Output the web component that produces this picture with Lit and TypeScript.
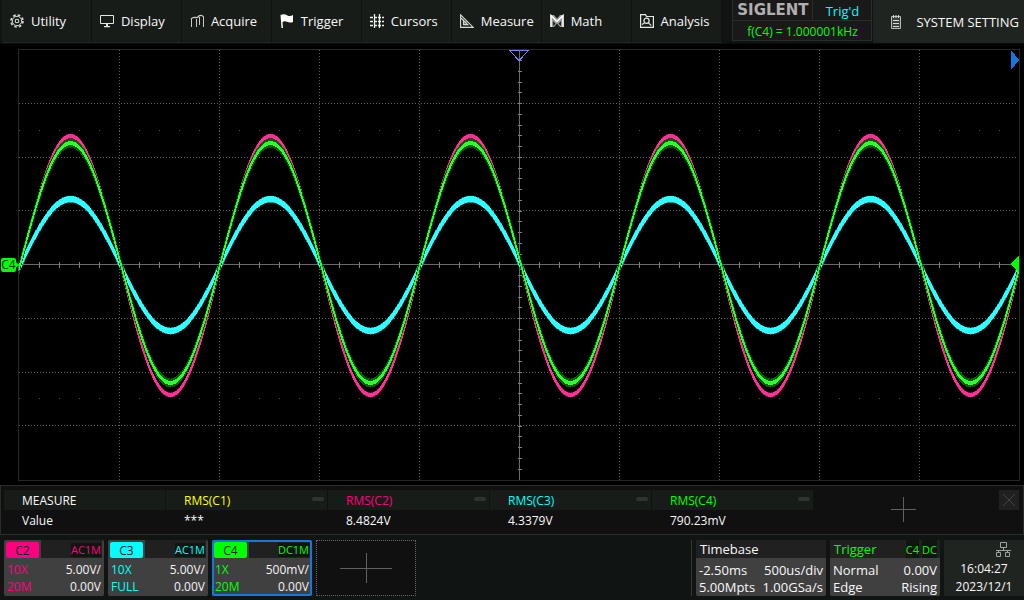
import { LitElement, html, svg, css } from "lit";
import { customElement, property } from "lit/decorators.js";
import { classMap } from "lit/directives/class-map.js";

const icons: Record<string, unknown> = {
  utility: svg`<g fill="none" stroke="#d8dad8">
    <circle cx="7" cy="7" r="6" stroke-width="1.600" stroke-dasharray="2.6 2.112"/>
    <circle cx="7" cy="7" r="4.700" stroke-width="1"/><circle cx="7" cy="7" r="1.8" stroke-width="1.100"/></g>`,
  display: svg`<path d="M.5 1.5h13v8H.5z" fill="none" stroke="#e6e8e6"/><path d="M6 10h2v2h2v1.200H4V12h2z" fill="#e6e8e6"/>`,
  acquire: svg`<g fill="none" stroke="#c8cac8"><path d="M1.500 13V5M6.500 13V5M9.500 11V3M13.500 13V3"/><path d="M1 5Q3 3 5.500 3.500T9 1.800Q12 .4 13.500 3" stroke-width="1.300"/></g>`,
  trigger: svg`<path d="M.5 1Q4 -.6 7 1.200T13 1V8Q10 9.200 7 7.800T2.500 8.200L3 14H1.500z" fill="#fff"/>`,
  cursors: svg`<g fill="none" stroke="#f0f2f0" stroke-width="1.300"><path d="M4.500 0v14M9.500 0v14" stroke-dasharray="3 1"/><path d="M0 3.500h14M0 7.500h14M0 11.500h14" stroke-dasharray="3 1"/></g>`,
  measure: svg`<g fill="none" stroke="#d8dad8" stroke-width="1.100"><path d="M.6.8V13.400H13.200z"/><path d="M3.500 6.500V10.600H7.800z"/><path d="M1 4l3 3M4.500 9.500l2-2"/></g>`,
  math: svg`<path d="M.5 1H4L7 4.500L10 1h3.500v12H10L7 9.500L4 13H.5z" fill="#9a9d9a"/><path d="M1 13V1.500L7 7.500L13 1.500V13" fill="none" stroke="#fff" stroke-width="1.500"/><path d="M3 12V7L5.500 9.800zM11 12V7L8.500 9.800z" fill="#222623"/>`,
  analysis: svg`<g fill="none" stroke="#e6e8e6" stroke-width="1.200"><path d="M.6.6H5.500L6.500 2.500H13.400V13.400H.6z"/><circle cx="6.500" cy="6.800" r="2.600"/><path d="M8.300 8.700l3 3M2 10.500l2.500-1.500"/></g>`,
};

const menu = ["Utility", "Display", "Acquire", "Trigger", "Cursors", "Measure", "Math", "Analysis"];

interface Channel {
  name: string; tone: string; coupling: string; probe: string; limit: string; scale: string; offset: string; active?: boolean;
}

const channels: Channel[] = [
  { name: "C2", tone: "pink", coupling: "AC1M", probe: "10X", limit: "20M", scale: "5.00V/", offset: "0.00V" },
  { name: "C3", tone: "cyan", coupling: "AC1M", probe: "10X", limit: "FULL", scale: "5.00V/", offset: "0.00V" },
  { name: "C4", tone: "green", coupling: "DC1M", probe: "1X", limit: "20M", scale: "500mV/", offset: "0.00V", active: true },
];

const measurements = [
  { label: "RMS(C1)", tone: "yellow", value: "***" },
  { label: "RMS(C2)", tone: "pink", value: "8.4824V" },
  { label: "RMS(C3)", tone: "cyan", value: "4.3379V" },
  { label: "RMS(C4)", tone: "green", value: "790.23mV" },
];

const tones = css`
  .pink { color: #ff0080; }
  .cyan { color: #00ffff; }
  .green { color: #00ff00; }
  .yellow { color: #ffff00; }
`;

/** Closed band that follows a sine trace, half px above and below it. */
function band(mid: number, amp: number, half: number): string {
  const top: string[] = [];
  const bottom: string[] = [];
  for (let x = 19; x <= 1018; x += 1) {
    const y = mid - amp * Math.sin(((x - 20.5) * Math.PI) / 100);
    top.push(`${x} ${(y - half).toFixed(1)}`);
    bottom.unshift(`${x} ${(y + half).toFixed(1)}`);
  }
  return `M${top.concat(bottom).join("L")}Z`;
}

const range = (n: number) => Array.from({ length: n }, (_, i) => i);

@customElement("scope-plot")
class ScopePlot extends LitElement {
  static styles = css`
    :host { display: block; position: relative; flex: 1; min-height: 240px; background: #000; }
    .plot { position: absolute; inset: 0; width: 100%; height: 100%; display: block; }
    .tag {
      position: absolute; left: 1px; top: 50%; margin-top: -7px;
      width: 15px; height: 14px; border-radius: 2px; background: #00ff00; color: #063c06;
      font: 12px/14px "Open Sans", sans-serif; text-align: center;
    }
    .tag::after { content: ""; position: absolute; left: 15px; top: 4px; border: solid transparent; border-width: 3px 0 3px 3px; border-left-color: #00ff00; }
    .frame { fill: none; stroke: #262826; }
    .dotted { fill: none; stroke: #626262; stroke-dasharray: 1 2; }
    .axis { fill: none; stroke: #6a6a6a; }
    .tick { fill: none; stroke: #808080; }
    .dot { fill: #505050; }
    .pink-haze { fill: #7a1040; stroke: #7a1040; stroke-width: 1; }
    .pink-trace { fill: #ff3096; stroke: #ff3096; stroke-width: 1; }
    .cyan-haze { fill: #0d8f92; stroke: #0d8f92; stroke-width: 2; }
    .cyan-trace { fill: #30ffff; stroke: #30ffff; stroke-width: 1; }
    .green-haze { fill: #075807; stroke: #075807; stroke-width: 1; }
    .green-trace { fill: #2cff2c; stroke: #2cff2c; stroke-width: 1; }
  `;

  render() {
    return html`
      <svg class="plot" viewBox="0 44 1024 441" preserveAspectRatio="none" shape-rendering="crispEdges" role="img" aria-label="Waveforms C2, C3 and C4">
        <rect class="frame" x="18.5" y="49.5" width="1001" height="431"/>
        ${range(9).filter((i) => i !== 4).map((i) => svg`<path class="dotted" d="M${119.5 + i * 100} 50V480"/>`)}
        ${[103, 157, 210, 318, 372, 425].map((y) => svg`<path class="dotted" d="M19 ${y + 0.5}H1018"/>`)}
        ${[130, 398].map((y) => range(50).map((i) => svg`<rect class="dot" x=${19 + i * 20} y=${y} width="1" height="1"/>`))}
        <path class="axis" d="M19 264.500H1019M519.500 50V480"/>
        ${range(49).map((i) => svg`<path class="tick" d="M${39.5 + i * 20} 262V268"/>`)}
        ${range(39).map((i) => svg`<path class="tick" d="M518 ${Math.round(60 + i * 10.75) + 0.5}H522"/>`)}
        <path class="pink-haze" d=${band(265.5, 129.5, 2)}/>
        <path class="pink-trace" d=${band(265.5, 129.5, 1.5)}/>
        <path class="cyan-haze" d=${band(265, 66, 2.5)}/>
        <path class="cyan-trace" d=${band(265, 66, 2.5)}/>
        <path class="green-haze" d=${band(263, 120, 4)}/>
        <path class="green-trace" d=${band(263, 120, 1.5)}/>
        <path d="M509.500 50.500H528.500L519 60.500z" fill="none" stroke="#8080ff"/>
        <path d="M1011 50L1019 60L1011 70z" fill="#1478dc"/>
        <path d="M1019 256V272L1010 264z" fill="#00ff00"/>
      </svg>
      <span class="tag">C4</span>
    `;
  }
}

@customElement("channel-card")
class ChannelCard extends LitElement {
  @property({ attribute: false }) channel!: Channel;

  static styles = [tones, css`
    :host { display: block; flex: 0 1 100px; }
    .card {
      display: flex; flex-direction: column; box-sizing: border-box; width: 100%; height: 56px; padding: 0 2px 2px;
      border: 0; border-radius: 2px; background: #404040; text-align: left;
      font: 12px/17px "Open Sans", sans-serif;
    }
    .active { box-shadow: inset 0 0 0 2px #1478dc; }
    .top { display: flex; align-items: stretch; gap: 2px; height: 18px; }
    .name { width: 33px; margin-top: 2px; border-radius: 2px; background: currentColor; text-align: center; line-height: 17px; }
    .name b { font-weight: 400; color: #102018; }
    .coupling { flex: 1; display: flex; justify-content: flex-end; align-items: center; padding: 2px 1px 0 0; background: #202020; font-size: 11px; }
    .active .coupling { margin-top: 2px; padding-top: 0; }
    .coupling span { background: #101510; line-height: 14px; }
    .row { display: flex; justify-content: space-between; padding: 0 1px; }
    .row:nth-child(2) { margin-top: 3px; }
    .value { color: #f4f4f4; }
  `];

  render() {
    const c = this.channel;
    return html`
      <button class=${classMap({ card: true, active: !!c.active })}>
        <span class="top"><span class="name ${c.tone}"><b>${c.name}</b></span><span class="coupling ${c.tone}"><span>${c.coupling}</span></span></span>
        <span class="row ${c.tone}">${c.probe}<span class="value">${c.scale}</span></span>
        <span class="row ${c.tone}">${c.limit}<span class="value">${c.offset}</span></span>
      </button>
    `;
  }
}

@customElement("app-root")
class AppRoot extends LitElement {
  static styles = [tones, css`
    :host { display: flex; flex-direction: column; min-height: 100vh; background: #000; color: #f8f8f8; font: 12px/20px "Open Sans", sans-serif; }
    button { border: 0; padding: 0; margin: 0; background: none; color: inherit; font: inherit; }
    svg { display: block; flex: none; }

    .header { display: flex; height: 44px; box-sizing: border-box; padding-left: 2px; background: #0f1311; border-bottom: 1px solid #090b0a; }
    .menu { display: flex; flex: 0 1 720px; }
    .item {
      flex: 1 1 0; display: flex; align-items: center; gap: 7px; padding-left: 8px; font-size: 13px; text-align: left;
      background: #181c19; border-right: 1px solid #0e110f; border-bottom: 1px solid #222623;
    }
    .status { flex: none; display: grid; grid-template-columns: 79px 58px; grid-template-rows: 20px 19px; gap: 1px; width: 140px; height: 41px; margin-left: 11px; padding: 0; border: solid #2a2c2a; border-width: 0 1px 1px; background: #2a2c2a; box-sizing: border-box; }
    .status > span { background: #191919; text-align: center; }
    .brand { color: #b0b0b0; font: bold 15px/20px "DejaVu Sans", sans-serif; }
    .trigd { font-size: 13px; line-height: 22px; }
    .freq { grid-column: span 2; font-size: 12px; line-height: 21px; }
    .system { flex: 1 0 150px; display: flex; align-items: center; gap: 14px; padding: 0 5px 0 17px; margin-left: 1px; background: #202421; font-size: 13px; white-space: nowrap; }

    .panel { display: flex; align-items: flex-start; height: 50px; box-sizing: border-box; padding: 4px 4px 3px 3px; border: 1px solid #2a2e2b; background: #101010; }
    .measure { flex: 0 1 810px; table-layout: fixed; border-collapse: separate; border-spacing: 0; }
    .measure th, .measure td { width: 162px; height: 20px; padding: 0 0 0 18px; box-sizing: border-box; font-weight: 400; text-align: left; line-height: 20px; }
    .measure th { background: #181c19; border-right: 1px solid #0e110f; }
    .measure th, .measure td { padding-top: 1px; line-height: 19px; }
    .head { display: flex; justify-content: space-between; padding-right: 3px; }
    .remove { width: 12px; height: 4px; margin-top: 6px; border-radius: 2px; background: #303431; }
    .add { display: flex; align-items: center; justify-content: center; flex: 1; height: 38px; padding-right: 6px; color: #606060; }
    .close { display: flex; align-items: center; justify-content: center; width: 20px; height: 20px; background: #202020; color: #444; }

    .footer { display: flex; gap: 4px; height: 65px; box-sizing: border-box; padding: 5px 0 4px 4px; background: #101412; }
    .new { flex: 0 1 100px; box-sizing: border-box; height: 56px; display: flex; align-items: center; justify-content: center; border: 1px dotted #686868; background: #101010; color: #606060; }
    .spacer { flex: 1; border-right: 1px solid #343834; }
    .box { height: 56px; background: #404040; border-radius: 2px; font-size: 13px; line-height: 17px; overflow: hidden; }
    .timebase { flex: 0 0 130px; }
    .trigger { flex: 0 0 110px; }
    .title { display: flex; justify-content: space-between; height: 18px; padding: 0 3px 0 4px; margin-bottom: 4px; background: #202020; line-height: 19px; }
    .badges { display: flex; gap: 3px; font-size: 11px; }
    .badges span { background: #101510; }
    .pair { display: flex; justify-content: space-between; padding: 0 3px; }
    .clock { flex: 0 0 80px; height: 56px; background: #202421; text-align: center; line-height: 18px; }
    .clock svg { margin: 2px 12px 2px auto; }
  `];

  plus(w: number, h: number) {
    return html`<svg width=${w} height=${h} viewBox="0 0 ${w} ${h}" shape-rendering="crispEdges"><path d="M0 ${Math.floor(h / 2) + 0.5}H${w}M${Math.floor(w / 2) + 0.5} 0V${h}" stroke="currentColor"/></svg>`;
  }

  render() {
    return html`
      <header class="header">
        <nav class="menu">
          ${menu.map((m) => html`<button class="item"><svg width="14" height="14" viewBox="0 0 14 14">${icons[m.toLowerCase()]}</svg>${m}</button>`)}
        </nav>
        <div class="status">
          <span class="brand">SIGLENT</span><span class="trigd cyan">Trig'd</span><span class="freq green">f(C4) = 1.000001kHz</span>
        </div>
        <button class="system">
          <svg width="12" height="14" viewBox="0 0 12 14"><path d="M1.500 1.500H10.500V13.500H1.500z" fill="#3b3f3c" stroke="#b8bab8"/><path d="M3.500 0V3M6 0V3M8.500 0V3M3 5.500H9M3 8.500H9M3 11.500H9" stroke="#d8dad8"/></svg>
          SYSTEM SETTING
        </button>
      </header>
      <scope-plot></scope-plot>
      <section class="panel">
        <table class="measure">
          <tr><th>MEASURE</th>${measurements.map((m) => html`<th class=${m.tone}><span class="head">${m.label}<button class="remove" aria-label="Remove ${m.label}"></button></span></th>`)}</tr>
          <tr><td>Value</td>${measurements.map((m) => html`<td>${m.value}</td>`)}</tr>
        </table>
        <button class="add" aria-label="Add measurement">${this.plus(25, 25)}</button>
        <button class="close" aria-label="Close"><svg width="12" height="12" viewBox="0 0 12 12"><path d="M0 0L12 12M12 0L0 12" stroke="currentColor"/></svg></button>
      </section>
      <footer class="footer">
        ${channels.map((c) => html`<channel-card .channel=${c}></channel-card>`)}
        <button class="new" aria-label="Add channel">${this.plus(52, 30)}</button>
        <div class="spacer"></div>
        <div class="box timebase">
          <div class="title">Timebase</div>
          <div class="pair"><span>-2.50ms</span><span>500us/div</span></div>
          <div class="pair"><span>5.00Mpts</span><span>1.00GSa/s</span></div>
        </div>
        <div class="box trigger">
          <div class="title green">Trigger<span class="badges"><span>C4</span><span>DC</span></span></div>
          <div class="pair"><span>Normal</span><span>0.00V</span></div>
          <div class="pair"><span>Edge</span><span>Rising</span></div>
        </div>
        <div class="clock">
          <svg width="17" height="16" viewBox="0 0 17 16" fill="none" stroke="#a0a2a0"><path d="M5.500.5h6v5h-6zM8.500 5.500v3M1 8.500h15M3.500 8.500v2M12.500 8.500v2M1.500 10.500h4v4h-4zM10.500 10.500h4v4h-4z"/></svg>
          <div>16:04:27</div>
          <div>2023/12/1</div>
        </div>
      </footer>
    `;
  }
}
